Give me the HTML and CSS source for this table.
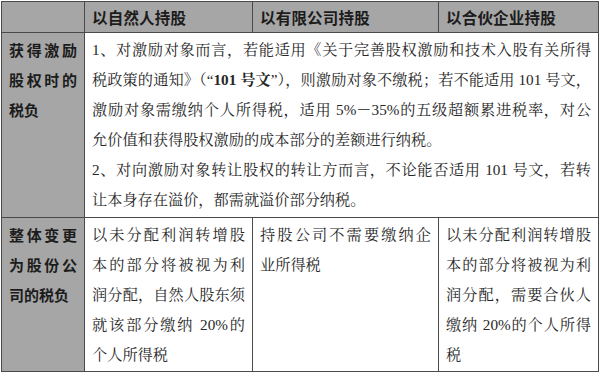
FILE: index.html
```html
<!DOCTYPE html>
<html lang="zh-CN">
<head>
<meta charset="utf-8">
<title>股权激励税负对比</title>
<link rel="stylesheet" href="styles.css">
</head>
<body>
<table class="tax">
  <colgroup>
    <col class="c1"><col class="c2"><col class="c3"><col class="c4">
  </colgroup>
  <thead>
    <tr>
      <th class="corner"></th>
      <th class="colhead">以自然人持股</th>
      <th class="colhead">以有限公司持股</th>
      <th class="colhead">以合伙企业持股</th>
    </tr>
  </thead>
  <tbody>
    <tr class="r1">
      <th class="rowhead">
        <span class="ln">获得激励</span>
        <span class="ln">股权时的</span>
        <span class="ln end">税负</span>
      </th>
      <td class="cell" colspan="3">
        <span class="ln">1、对激励对象而言，若能适用《关于完善股权激励和技术入股有关所得</span>
        <span class="ln">税政策的通知》（“<b>101 号文</b>”），则激励对象不缴税；若不能适用 101 号文，</span>
        <span class="ln">激励对象需缴纳个人所得税，适用 5%－35%的五级超额累进税率，对公</span>
        <span class="ln end">允价值和获得股权激励的成本部分的差额进行纳税。</span>
        <span class="ln">2、对向激励对象转让股权的转让方而言，不论能否适用 101 号文，若转</span>
        <span class="ln end">让本身存在溢价，都需就溢价部分纳税。</span>
      </td>
    </tr>
    <tr class="r2">
      <th class="rowhead">
        <span class="ln">整体变更</span>
        <span class="ln">为股份公</span>
        <span class="ln end">司的税负</span>
      </th>
      <td class="cell">
        <span class="ln">以未分配利润转增股</span>
        <span class="ln">本的部分将被视为利</span>
        <span class="ln">润分配，自然人股东须</span>
        <span class="ln">就该部分缴纳 20%的</span>
        <span class="ln end">个人所得税</span>
      </td>
      <td class="cell">
        <span class="ln">持股公司不需要缴纳企</span>
        <span class="ln end">业所得税</span>
      </td>
      <td class="cell">
        <span class="ln">以未分配利润转增股</span>
        <span class="ln">本的部分将被视为利</span>
        <span class="ln">润分配，需要合伙人</span>
        <span class="ln">缴纳 20%的个人所得</span>
        <span class="ln end">税</span>
      </td>
    </tr>
  </tbody>
</table>
</body>
</html>
```

FILE: styles.css
```css
html, body {
  margin: 0;
  padding: 0;
  background: #ffffff;
}

body {
  padding: 1px 0 0 1px;
}

.tax {
  border-collapse: collapse;
  table-layout: fixed;
  width: 597px;
  color: #1e1e1e;
}

.c1 { width: 83px; }
.c2 { width: 168px; }
.c3 { width: 186px; }
.c4 { width: 160px; }

.tax th,
.tax td {
  border: 1px solid #4a4a4a;
  vertical-align: top;
  text-align: left;
}

.corner,
.colhead,
.rowhead {
  background: #a6a6a6;
  font-family: "Noto Sans CJK SC", "Noto Sans", sans-serif;
  font-weight: 700;
  color: #1c1c1c;
}

.colhead {
  height: 30px;
  padding: 0 7px;
  font-size: 15.5px;
  line-height: 30px;
  letter-spacing: 0.2px;
}

.corner {
  padding: 0;
}

.rowhead {
  padding: 2px 7px 1px;
  font-size: 15px;
  line-height: 30px;
}

.cell {
  padding: 2px 7px 1px;
  font-family: "Liberation Serif", "Noto Serif CJK SC", "Noto Sans CJK SC", serif;
  font-size: 15.2px;
  line-height: 30px;
  color: #262626;
}

.r1 .rowhead,
.r1 .cell {
  padding-bottom: 2px;
}

.ln {
  display: block;
  white-space: nowrap;
  text-align: justify;
  text-align-last: justify;
}

.ln.end {
  text-align-last: left;
}

.cell b {
  font-weight: 700;
}
```
